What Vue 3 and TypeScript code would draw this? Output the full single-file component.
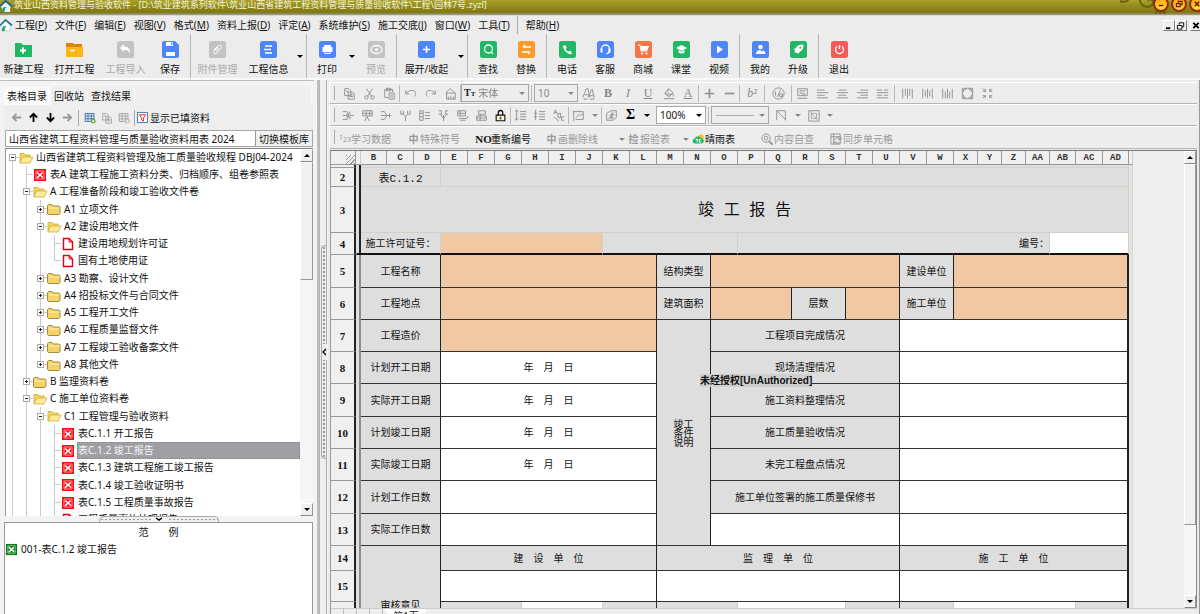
<script setup lang="ts">
import { ref } from 'vue'

interface Tool { label: string; icon: string; off?: boolean; drop?: boolean; wide?: boolean }
interface Node { level: number; kind: 'open' | 'closed' | 'doc' | 'sheet'; text: string; end?: boolean }
interface Cell { span: number; text?: string; rows?: number; kind: string }
interface Row { n: string; h: number; cells: Cell[] }

const menus: [string, string][] = [
  ['工程', 'P'], ['文件', 'F'], ['编辑', 'E'], ['视图', 'V'], ['格式', 'M'], ['资料上报', 'D'], ['评定', 'A'],
  ['系统维护', 'S'], ['施工交底', 'J'], ['窗口', 'W'], ['工具', 'T'],
]

const tile = (color: string, inner: string): string => `<rect width="17" height="17" rx="2.5" fill="${color}"/>${inner}`
const W = 'fill="none" stroke="#fff" stroke-width="1.3"'
const toolIcons: Record<string, string> = {
  create: '<path d="M0 3V2h6l2 2h9v12H0z" fill="#22b765"/><path d="M8 6.500v6M5 9.500h6" stroke="#fff" stroke-width="2"/>',
  open: '<path d="M0 2h7l1 1h8v4H0z" fill="#d9860b"/><path d="M0 6h17v10H0z" fill="#fdb813"/><path d="M4 9.500h5" stroke="#fff" stroke-width="1.500"/>',
  import: tile('#c3c3c3', '<path d="M3 7l4-4v2.500c4 0 6 2.500 6 7-1.500-3-3-3.500-6-3.500V11z" fill="#fff"/>'),
  save: '<path d="M0 2a2 2 0 0 1 2-2h11l4 4v11a2 2 0 0 1-2 2H2a2 2 0 0 1-2-2z" fill="#4f86f7"/><path d="M4 1h7v4H4zM4 11h9v4H4z" fill="#fff"/><path d="M9 1.500h1.500v2H9z" fill="#4f86f7"/>',
  attach: tile('#c3c3c3', '<path d="M5 9l4-4c2-2 4 0 3 2l-4 5c-2 2-4 0-3-2l4-4M7 10l3-3" fill="none" stroke="#fff"/>'),
  info: tile('#4f86f7', `<path d="M5 5h7M4 8.500h7M5 12h7" ${W}/>`),
  print: tile('#4f86f7', '<path d="M5 4h7v2H5zM3.500 6h10v5h-2v-1h-6v1h-2zM5.500 10h6v3h-6z" fill="#fff"/><path d="M6.500 11.500h4" stroke="#4f86f7"/>'),
  preview: tile('#c3c3c3', `<ellipse cx="8.500" cy="8.500" rx="5.500" ry="4" ${W}/><circle cx="8.500" cy="8.500" r="1.500" fill="#fff"/>`),
  expand: tile('#4f86f7', '<path d="M8.500 5v7M5 8.500h7" stroke="#fff" stroke-width="1.500"/>'),
  find: tile('#22b765', `<circle cx="8.500" cy="8" r="4" ${W}/><path d="M11 11l2 2" ${W}/>`),
  replace: tile('#fb9a2c', `<path d="M13 6H5M7 4L5 6M4 11h8M10 13l2-2" ${W}/>`),
  phone: tile('#22b765', '<path d="M5 4l2 1 .5 2-1 1.300 2.500 2.500 1.300-1 2 .7.700 2c-1 1.200-2.500.8-4.500-.5C6 10.500 4.500 8 4 6z" fill="#fff"/>'),
  service: tile('#4f86f7', `<path d="M4.500 9V8a4 4 0 0 1 8 0v1c0 2-1 3.500-3 3.500" ${W}/><path d="M3.500 7.500h2v4h-2zM11.500 7.500h2v4h-2z" fill="#fff"/>`),
  shop: tile('#f5764a', '<path d="M3 4h2l1 6h6" fill="none" stroke="#fff"/><path d="M5.500 5H14l-1.500 4.500H6z" fill="#fff"/><circle cx="7" cy="12.500" r="1.100" fill="#fff"/><circle cx="11.500" cy="12.500" r="1.100" fill="#fff"/>'),
  lesson: tile('#22b765', '<path d="M8.500 4l5.500 3-5.500 3L3 7z" fill="#fff"/><path d="M5.500 9v2.500c2 1.300 4 1.300 6 0V9l-3 1.700z" fill="#fff"/>'),
  video: tile('#4f86f7', '<path d="M6 4.500v8l6-4z" fill="#fff"/>'),
  mine: tile('#4f86f7', '<circle cx="8.500" cy="6" r="2.300" fill="#fff"/><path d="M4 13c0-3 2-4 4.500-4l1 2 1-1.500c2 .5 3 1.500 3 3.500z" fill="#fff"/>'),
  upgrade: tile('#22b765', '<path d="M13.500 3.500c-4-.3-6.500 1-8 4L3.500 8l1.500 1.300-.5 2.700 2.500-.5L8.500 13l1-2c3-1.500 4.300-4 4-7.500z" fill="#fff"/><circle cx="10.300" cy="6.700" r="1" fill="#22b765"/>'),
  exit: tile('#f65b5b', `<path d="M6 5.500a4 4 0 1 0 5 0M8.500 4v4" ${W}/>`),
}

const toolGroups: Tool[][] = [
  [{ label: '新建工程', icon: 'create' }, { label: '打开工程', icon: 'open' }, { label: '工程导入', icon: 'import', off: true }, { label: '保存', icon: 'save' }],
  [{ label: '附件管理', icon: 'attach', off: true }, { label: '工程信息', icon: 'info', drop: true }],
  [{ label: '打印', icon: 'print', drop: true }, { label: '预览', icon: 'preview', off: true }],
  [{ label: '展开/收起', icon: 'expand', drop: true, wide: true }],
  [{ label: '查找', icon: 'find' }, { label: '替换', icon: 'replace' }],
  [{ label: '电话', icon: 'phone' }, { label: '客服', icon: 'service' }, { label: '商城', icon: 'shop' }, { label: '课堂', icon: 'lesson' }, { label: '视频', icon: 'video' }],
  [{ label: '我的', icon: 'mine' }, { label: '升级', icon: 'upgrade' }],
  [{ label: '退出', icon: 'exit' }],
]

const tree: Node[] = [
  { level: 0, kind: 'open', text: '山西省建筑工程资料管理及施工质量验收规程 DBJ04-2024' },
  { level: 1, kind: 'sheet', text: '表A 建筑工程施工资料分类、归档顺序、组卷参照表' },
  { level: 1, kind: 'open', text: 'A 工程准备阶段和竣工验收文件卷' },
  { level: 2, kind: 'closed', text: 'A1 立项文件' },
  { level: 2, kind: 'open', text: 'A2 建设用地文件' },
  { level: 3, kind: 'doc', text: '建设用地规划许可证' },
  { level: 3, kind: 'doc', text: '国有土地使用证', end: true },
  { level: 2, kind: 'closed', text: 'A3 勘察、设计文件' },
  { level: 2, kind: 'closed', text: 'A4 招投标文件与合同文件' },
  { level: 2, kind: 'closed', text: 'A5 工程开工文件' },
  { level: 2, kind: 'closed', text: 'A6 工程质量监督文件' },
  { level: 2, kind: 'closed', text: 'A7 工程竣工验收备案文件' },
  { level: 2, kind: 'closed', text: 'A8 其他文件', end: true },
  { level: 1, kind: 'closed', text: 'B 监理资料卷' },
  { level: 1, kind: 'open', text: 'C 施工单位资料卷' },
  { level: 2, kind: 'open', text: 'C1 工程管理与验收资料' },
  { level: 3, kind: 'sheet', text: '表C.1.1 开工报告' },
  { level: 3, kind: 'sheet', text: '表C.1.2 竣工报告' },
  { level: 3, kind: 'sheet', text: '表C.1.3 建筑工程施工竣工报告' },
  { level: 3, kind: 'sheet', text: '表C.1.4 竣工验收证明书' },
  { level: 3, kind: 'sheet', text: '表C.1.5 工程质量事故报告' },
  { level: 3, kind: 'doc', text: '工程质量事故处理报告' },
]
const selected = ref(17)

const sheetMark = (c: string, d: string): string => `<rect x="1" y="1" width="12" height="12" fill="${c}"/><path d="M3 3h8v8H3z" fill="none" stroke="${d}" stroke-width=".8"/><path d="M4 4.500l6 5M9.500 4.500L4 10" stroke="#fff" stroke-width="1.600"/>`
const nodeIcons: Record<string, string> = {
  open: '<path d="M1 12V2.500h4l1 1.500h5v2" fill="#f6d55c" stroke="#c9a83c" stroke-width=".8"/><path d="M1 12l2.500-6H14l-3 6z" fill="#ffec94" stroke="#d2ab3c" stroke-width=".8"/>',
  closed: '<path d="M.5 11.500v-8l1-1H5l1 1.500h6l1 1v6.500l-1 1H1.500z" fill="#f3d36a" stroke="#a88a30"/><path d="M1.500 6h11" stroke="#fff3b8"/>',
  doc: '<path d="M2.500 1.500H8l3.500 3.500v7.500h-9z" fill="#fff" stroke="#e60012" stroke-width="1.400"/><path d="M8 1.500V5h3.500" fill="none" stroke="#e60012"/>',
  sheet: sheetMark('#f80c14', '#ffb0b0'),
  green: sheetMark('#0a7a1a', '#a5d8a5'),
}

const g: Record<string, string> = {
  copy: '<path d="M2 2h5l2 2v6H2zM6 6h5l2 2v6H6zM7.500 9h4M7.500 11h4M3.500 5h3"/>',
  cut: '<path d="M4 2l6 9M11 2l-6 9"/><circle cx="4" cy="12" r="2"/><circle cx="11" cy="12" r="2"/>',
  paste: '<path d="M2 3h9v3M2 3v9h4M4 1.500h5v3H4zM7 7h6v7H7zM8.500 9.500h3M8.500 11.500h3"/>',
  undo: '<path d="M2 4v4h4M2 8c3-5 9-5 11-2 1 2 0 4-1 5"/>',
  redo: '<path d="M13 4v4H9M13 8C10 3 4 3 3 6c-1 2 0 4 1 5"/>',
  brush: '<path d="M7 2l6 5H2zM3 7v7h10V7M5 14v-3M8 14v-4M11 14v-3"/>',
  effect: '<path d="M1 12L5 2h2l2 10M3 9h5M7 12l4-9h1l2 10M9 10h4M2 14h4M9 14h5"/>',
  fill: '<path d="M3 7l5-5 5 5-5 4zM7 2v4M13 8v3M2 13.500h12"/><path d="M4 8h7l-3 3z"/>',
  plus: '<path d="M7.500 2v11M2 7.500h11" stroke-width="2"/>',
  minus: '<path d="M2 7.500h11" stroke-width="2"/>',
  ratio: '<circle cx="7.500" cy="7.500" r="6.500"/><path d="M4 5v5M10 3l-4 9M9 8h3v3H9z"/>',
  wrap: '<path d="M2 2h11v8H2zM4 4.500h7M4 7h4v3M10 7v3M2 13h11"/>',
  left: '<path d="M1 3.500h9M1 6.500h13M1 9.500h9M1 12.500h13"/>',
  center: '<path d="M3 3.500h9M1 6.500h13M3 9.500h9M1 12.500h13"/>',
  right: '<path d="M5 3.500h9M1 6.500h13M5 9.500h9M1 12.500h13"/>',
  just: '<path d="M1 3.500h6M9 3.500h5M1 6.500h13M1 9.500h6M9 9.500h5M1 12.500h13"/>',
  vtop: '<path d="M2 2v11M5 2v8M7.500 2v11M10 2v8M13 2v11"/>',
  vmid: '<path d="M2 2v11M5 4v7M7.500 2v11M10 4v7M13 2v11"/>',
  vbot: '<path d="M2 2v11M5 5v8M7.500 2v11M10 5v8M13 2v11"/>',
  full: '<path d="M1.500 1.500h12v12h-12z"/><path d="M3 6V3h3M9 3h3v3M12 9v3H9M6 12H3V9"/>',
  shrink: '<path d="M2 2l3 3M5 2v3H2M13 2l-3 3M10 2v3h3M2 13l3-3M2 10h3v3M13 13l-3-3M13 10h-3v3"/>',
  mergeA: '<path d="M1 3h5v9H1M6 7.500H1M9 3l-2 4.500L9 12M9 7.500h5M10 5l-3 2.500L10 10"/>',
  mergeB: '<path d="M2 2h11v6H2zM2 5h11M6 2v6M10 2v6M4 14l3-5 3 5"/>',
  mergeC: '<path d="M1 3h4l3 4.500L5 12H1M1 7.500h12M11 5v5"/>',
  insA: '<path d="M2 2v4h3V2M10 2v4h3V2M5 6l2.500 3L10 6M7.500 9v5"/>',
  insB: '<path d="M2 2h4v11H2zM6 5H2M6 9H2M8 4h6M8 7.500h6M8 11h6"/>',
  insC: '<path d="M2 2h3v4H2M13 2h-3v4h3M4 6l3.500 5L11 6M7.500 7v7"/>',
  rowA: '<path d="M2 2h9v6H2zM2 5h9M5 2v6M3 11h9l2-3M5 13h6"/>',
  rowB: '<path d="M4 2h8v4H4zM2 8h11v5H2zM2 10.500h11M6 6v7"/>',
  spaceA: '<path d="M3 1v12M1 3l2-2 2 2M1 11l2 2 2-2M7 3h7M7 6h7M7 9h7M7 12h7"/>',
  spaceB: '<path d="M3 1v12M1 5h4M1 9h4M7 3h7M7 6h7M7 9h7M7 12h7"/>',
  abc: '<path d="M2 6l2-5 2 5M3 4h2M7 5v5h3V5H7M14 9h-3v4h3M2 9l6 5"/>',
  picture: '<path d="M2 2v12M1 3h12v9H4M5 10l3-4 2 2 2-2M11 5h1"/>',
  inspect: '<path d="M2 5l5-3h6v8l-4 3H2zM5 7h6M5 10h5M8 4v8M4 12l6-8"/>',
  diag: '<path d="M2 2h10v11M2 2l11 11M2 2v11"/>',
  boxed: '<path d="M2 2h12v12H2z"/><path d="M5 2v3l8 8M5 5h6v6H5z" stroke-width=".8"/>',
  gridadd: '<path d="M1.500 2h11v10h-11zM1.500 5h11M1.500 8.500h11M5 2v10M9 2v10" /><circle cx="11.500" cy="11.500" r="3" class="dot"/><path class="cross" d="M11.500 10v3M10 11.500h3"/>',
}
type Mini = string
const row1a: Mini[] = ['copy', 'cut', 'paste', '|', 'undo', 'redo', 'brush', '|']
const row1b: Mini[] = ['effect', 'tB', 'tI', 'tU', 'fill', 'tA', '|', 'plus', 'minus', '|', 't²', '|', 'ratio', '|', 'wrap', 'left', 'center', 'right', 'just', '||', 'vtop', 'vmid', 'vbot', 'full', 'shrink']
const row2a: Mini[] = ['mergeA', 'mergeB', 'mergeC', 'insA', 'insB', 'insC', 'rowA', 'rowB']

const letters: string[] = 'BCDEFGHIJKLMNOPQRSTUVWXYZ'.split('').concat(['AA', 'AB', 'AC', 'AD'])
const colWidth = (c: string): number => (['X', 'Y', 'Z', 'AA'].includes(c) ? 24 : ['B', 'AB', 'AD'].includes(c) ? 26 : 27)

const o = (span: number): Cell => ({ span, kind: 'fill' })
const w = (span: number, text = ''): Cell => ({ span, text, kind: 'blank' })
const l = (span: number, text = '', rows = 1): Cell => ({ span, text, rows, kind: 'label' })
const soft = (span: number, text = '', kind = 'soft'): Cell => ({ span, text, kind })
const date = '年　月　日'
const rows: Row[] = [
  { n: '·', h: 3, cells: [soft(29)] },
  { n: '2', h: 19, cells: [soft(3, '表C.1.2', 'soft code'), soft(26)] },
  { n: '3', h: 46, cells: [soft(29, '竣 工 报 告', 'soft title')] },
  { n: '4', h: 22, cells: [soft(3, '施工许可证号：'), soft(6, '', 'soft peach'), soft(5), soft(12, '编号：', 'soft end'), soft(3, '', 'soft paper')] },
  { n: '5', h: 33, cells: [l(3, '工程名称'), o(8), l(2, '结构类型'), o(7), l(2, '建设单位'), o(7)] },
  { n: '6', h: 32, cells: [l(3, '工程地点'), o(8), l(2, '建筑面积'), o(3), l(2, '层数'), o(2), l(2, '施工单位'), o(7)] },
  { n: '7', h: 32, cells: [l(3, '工程造价'), o(8), { span: 2, rows: 7, text: '竣工条件说明', kind: 'label narrow' }, l(7, '工程项目完成情况'), w(9)] },
  { n: '8', h: 32, cells: [l(3, '计划开工日期'), w(8, date), l(7, '现场清理情况'), w(9)] },
  { n: '9', h: 33, cells: [l(3, '实际开工日期'), w(8, date), l(7, '施工资料整理情况'), w(9)] },
  { n: '10', h: 32, cells: [l(3, '计划竣工日期'), w(8, date), l(7, '施工质量验收情况'), w(9)] },
  { n: '11', h: 32, cells: [l(3, '实际竣工日期'), w(8, date), l(7, '未完工程盘点情况'), w(9)] },
  { n: '12', h: 33, cells: [l(3, '计划工作日数'), w(8), l(7, '施工单位签署的施工质量保修书'), w(9)] },
  { n: '13', h: 32, cells: [l(3, '实际工作日数'), w(8), w(7), w(9)] },
  { n: '14', h: 25, cells: [l(3, '审核意见', 3), l(8, '建　设　单　位'), l(9, '监　理　单　位'), l(9, '施　工　单　位')] },
  { n: '15', h: 31, cells: [w(8), w(9), w(9)] },
  { n: '', h: 64, cells: [soft(3), soft(3, '', 'soft paper'), soft(2, '', 'soft edge'), soft(3), soft(4, '', 'soft paper'), soft(2, '', 'soft edge'), soft(2), soft(5, '', 'soft paper'), soft(2, '', 'soft last')] },
]
</script>

<template>
  <div class="app">
    <header class="titlebar">
      <svg class="logo" viewBox="0 0 13 13"><path d="M0 7L6 1l7 6-2 1v5H2V8z" fill="#e8f4fa" /><path d="M0 7L6 1l7 6" fill="none" stroke="#1c5f96" stroke-width="2" /><path d="M2 13c0-5 3-6 5-5-2 1-2 3-2 5z" fill="#22a06a" /></svg>
      <span class="caption">筑业山西资料管理与验收软件 - [D:\筑业建筑系列软件\筑业山西省建筑工程资料管理与质量验收软件\工程\园林7号.zyzl]</span>
      <svg class="swirl" viewBox="0 0 48 15"><path d="M0 1c4 2 8 0 8-1M20 0c0 6 8 9 12 5 3-4-2-8-4-4M34 0c-1 5 2 7 4 6M36 14c0-5 8-5 10-1M40 14c0-3 4-3 5 0" fill="none" stroke="#6a6214" stroke-width="2" /></svg>
      <button class="round" aria-label="最小化"><svg viewBox="0 0 16 16"><path d="M5 10h6" stroke-width="2" /></svg></button>
      <button class="round" aria-label="还原"><svg viewBox="0 0 16 16"><path d="M4.500 7.500h5v4h-5zM7 7V4.500h5v4.500h-2" /></svg></button>
      <button class="round" aria-label="关闭"><svg viewBox="0 0 16 16"><path d="M5 5l6 6M11 5l-6 6" stroke-width="2" /></svg></button>
    </header>

    <nav class="menubar">
      <svg class="logo" viewBox="0 0 13 13"><path d="M0 7L6 1l7 6-2 1v5H2V8z" fill="#fff" stroke="#8bb" stroke-width=".5" /><path d="M0 7L6 1l7 6" fill="none" stroke="#1c7a96" stroke-width="2" /><path d="M2 13c0-5 3-6 5-5-2 1-2 3-2 5z" fill="#22a06a" /></svg>
      <button v-for="m in menus" :key="m[0]">{{ m[0] }}(<u>{{ m[1] }}</u>)</button>
      <i class="menuline"></i>
      <button>帮助(<u>H</u>)</button>
      <span class="mdi">
        <button aria-label="最小化窗口"><svg viewBox="0 0 11 10"><path d="M2 8h5" stroke-width="2" /></svg></button>
        <button aria-label="还原窗口"><svg viewBox="0 0 11 10"><path d="M1.500 5h5v4h-5zM3.500 4V2h5v4.500h-2" /></svg></button>
        <button aria-label="关闭窗口" class="far"><svg viewBox="0 0 11 10"><path d="M2.500 2l6 6M8.500 2l-6 6" stroke-width="2" /></svg></button>
      </span>
    </nav>

    <div class="toolbar">
      <div v-for="(grp, gi) in toolGroups" :key="gi" class="group">
        <template v-for="t in grp" :key="t.label">
          <button class="tool" :class="{ off: t.off, long: t.label.length === 4, wide: t.wide }" :disabled="t.off">
            <svg viewBox="0 0 17 17" v-html="toolIcons[t.icon]"></svg><span>{{ t.label }}</span>
          </button>
          <button v-if="t.drop" class="drop" :aria-label="t.label + '选项'"><i class="tri"></i></button>
        </template>
      </div>
    </div>

    <main class="body">
      <aside class="side">
        <div class="tabs">
          <button class="active">表格目录</button><button>回收站</button><button>查找结果</button>
        </div>
        <div class="sidetools">
          <button aria-label="左移" class="dim"><svg viewBox="0 0 12 12"><path d="M11 6H2M6 2L2 6l4 4" /></svg></button>
          <button aria-label="上移"><svg viewBox="0 0 12 12"><path d="M6 11V2M2 6l4-4 4 4" /></svg></button>
          <button aria-label="下移"><svg viewBox="0 0 12 12"><path d="M6 1v9M2 6l4 4 4-4" /></svg></button>
          <button aria-label="右移" class="dim"><svg viewBox="0 0 12 12"><path d="M1 6h9M6 2l4 4-4 4" /></svg></button>
          <i class="bar"></i>
          <button aria-label="添加表格" class="mini blue"><svg viewBox="0 0 15 15" v-html="g.gridadd"></svg></button>
          <button aria-label="复制表格" class="mini"><svg viewBox="0 0 15 15" v-html="g.copy"></svg></button>
          <button aria-label="删除表格" class="mini"><svg viewBox="0 0 15 15" v-html="g.gridadd"></svg></button>
          <i class="bar"></i>
          <button class="filter"><svg viewBox="0 0 12 12"><path d="M.5.5h11v11H.5z" fill="#fff" stroke="#3f6fae" /><path d="M2.500 3h7L7 6.500V10L5 8.500v-2z" fill="#fff" stroke="#e02020" /></svg>显示已填资料</button>
        </div>
        <div class="template">
          <input type="text" aria-label="模板库" value="山西省建筑工程资料管理与质量验收资料用表 2024" />
          <button>切换模板库</button>
        </div>
        <div class="treebox">
          <ul class="tree">
            <li v-for="(n, i) in tree" :key="n.text" :class="{ sel: selected === i }" @click="selected = i">
              <i v-for="k in n.level" :key="k" class="guide"></i>
              <i class="guide own" :class="{ end: n.end, start: i === 0 }"><button v-if="n.kind === 'open' || n.kind === 'closed'" class="toggle" :class="n.kind" :aria-label="n.text"></button></i>
              <svg viewBox="0 0 14 14" v-html="nodeIcons[n.kind]"></svg>
              <span>{{ n.text }}</span>
            </li>
          </ul>
          <div class="scroll"><button aria-label="向上滚动"><i class="tri up"></i></button><i class="thumb short"></i><i class="track"></i><button aria-label="向下滚动"><i class="tri"></i></button></div>
        </div>
        <div class="hsplit"><button aria-label="折叠范例"><svg viewBox="0 0 8 5"><path d="M1 1l3 2 3-2" /></svg></button></div>
        <section class="samples">
          <h2>范　　例</h2>
          <p><svg viewBox="0 0 14 14" v-html="nodeIcons.green"></svg>001-表C.1.2 竣工报告</p>
        </section>
      </aside>

      <div class="vsplit"><div class="grip"><button aria-label="折叠目录"><svg viewBox="0 0 5 8"><path d="M4 1L1 4l3 3" /></svg></button></div></div>

      <section class="editor">
        <div class="strip">
          <template v-for="(m, i) in row1a" :key="i"><i v-if="m === '|'" class="sep"></i><button v-else class="mini" :aria-label="m"><svg viewBox="0 0 15 15" v-html="g[m]"></svg></button></template>
          <label class="combo font"><b>T<small>T</small></b><select aria-label="字体" disabled><option>宋体</option></select><i class="tri"></i></label>
          <i class="sep four"></i>
          <label class="combo size"><select aria-label="字号" disabled><option>10</option></select><i class="tri"></i></label>
          <template v-for="(m, i) in row1b" :key="i">
            <i v-if="m === '|'" class="sep"></i><i v-else-if="m === '||'" class="sep four"></i>
            <button v-else-if="m[0] === 't'" class="mini letter" :class="'k' + m[1]"><template v-if="m[1] === '²'">b²</template><template v-else>{{ m[1] }}</template></button>
            <button v-else class="mini" :class="{ roomy: m === 'ratio' }" :aria-label="m"><svg viewBox="0 0 15 15" v-html="g[m]"></svg></button>
          </template>
        </div>
        <div class="strip second">
          <button v-for="m in row2a" :key="m" class="mini" :aria-label="m"><svg viewBox="0 0 15 15" v-html="g[m]"></svg></button>
          <button class="mini" aria-label="锁定"><svg viewBox="0 0 15 15"><path d="M5 7V4c0-3 5-3 5 0v3" stroke="#111" stroke-width="1.500" /><path d="M2.500 7h10v6.500h-10z" fill="#fff6a8" stroke="#111" stroke-width="1.300" /><path d="M7.500 9v3" stroke="#2a52b8" stroke-width="2" /></svg></button>
          <i class="sep"></i>
          <button v-for="m in ['spaceA', 'spaceB', 'abc']" :key="m" class="mini" :aria-label="m"><svg viewBox="0 0 15 15" v-html="g[m]"></svg></button>
          <i class="sep"></i>
          <button class="mini" aria-label="图片"><svg viewBox="0 0 15 15" v-html="g.picture"></svg></button>
          <button class="pick" aria-label="图片选项"><i class="tri pale"></i></button>
          <i class="sep"></i>
          <button class="mini" aria-label="检查"><svg viewBox="0 0 15 15" v-html="g.inspect"></svg></button>
          <button class="mini letter sum">Σ</button>
          <button class="pick" aria-label="求和选项"><i class="tri"></i></button>
          <label class="combo zoom"><select aria-label="缩放"><option>100%</option></select><i class="tri"></i></label>
          <i class="sep four"></i>
          <label class="combo line"><select aria-label="线型" disabled><option></option></select><i class="tri"></i></label>
          <button class="mini" aria-label="斜线"><svg viewBox="0 0 15 15" v-html="g.diag"></svg></button>
          <button class="pick" aria-label="斜线选项"><i class="tri pale"></i></button>
          <button class="mini" aria-label="边框"><svg viewBox="0 0 15 15" v-html="g.boxed"></svg></button>
          <button class="pick" aria-label="边框选项"><i class="tri pale"></i></button>
        </div>
        <div class="strip third">
          <button class="word"><small>1<sub>2</sub><sub>3</sub></small>学习数据</button>
          <button class="word"><span class="mark">中</span>特殊符号</button>
          <button class="word on"><em>NO</em>重新编号</button>
          <button class="word"><span class="mark">中</span>画删除线</button>
          <button class="pick" aria-label="删除线选项"><i class="tri pale"></i></button>
          <button class="word tight"><span class="mark">捡</span>报验表</button>
          <button class="pick" aria-label="报验表选项"><i class="tri pale"></i></button>
          <button class="word on"><svg viewBox="0 0 13 11"><circle cx="9.500" cy="3.500" r="3" fill="#fbb81b" /><path d="M3 10.500a2.800 2.800 0 0 1 0-5.500 3.500 3.500 0 0 1 6.500-.5 3 3 0 0 1 .5 6z" fill="#22b765" /><path d="M4 6h3M5.500 6v3M10 6H8v3h2" stroke="#fff" fill="none" /></svg>晴雨表</button>
          <button class="word"><svg viewBox="0 0 13 13" class="grey"><circle cx="5.500" cy="5.500" r="4.500" /><circle cx="5.500" cy="5.500" r="2" /><path d="M9 9l3.500 3.500" stroke-width="2" /></svg>内容自查</button>
          <button class="word"><svg viewBox="0 0 13 13" class="grey"><path d="M1 1h10v11H1zM1 4h10M4 1v11" /><path d="M5 8c1-4 6-3 7-1M12 4v3H9M12 9c-1 3-5 3-6 1M5 12v-2h3" /></svg>同步单元格</button>
        </div>

        <div class="work">
          <div class="canvas">
            <div class="sheet">
              <table>
                <colgroup>
                  <col class="c-head" /><col class="c-a" />
                  <col v-for="c in letters" :key="c" :style="{ width: colWidth(c) + 'px' }" />
                  <col class="c-tail" />
                </colgroup>
                <thead>
                  <tr><th class="corner"></th><th class="a"></th><th v-for="c in letters" :key="c" scope="col">{{ c }}</th><th class="a"></th></tr>
                </thead>
                <tbody>
                  <tr v-for="(r, i) in rows" :key="i" :class="{ ruled: i > 3, prerule: i === 3 }" :style="{ height: r.h + 'px' }">
                    <th scope="row"><span v-if="i">{{ r.n }}</span></th>
                    <td class="a"></td>
                    <td v-for="(c, j) in r.cells" :key="j" :colspan="c.span" :rowspan="c.rows || 1" :class="c.kind"><div v-if="c.text">{{ c.text }}</div></td>
                    <td class="tail"></td>
                  </tr>
                </tbody>
              </table>
              <span class="watermark">未经授权[UnAuthorized]</span>
            </div>
            <div class="scroll big"><button aria-label="向上滚动表格"><i class="tri up"></i></button><i class="thumb"></i><i class="track"></i><button aria-label="向下滚动表格"><i class="tri"></i></button></div>
          </div>
          <footer class="sheets">
            <button aria-label="首页"><svg viewBox="0 0 6 4"><path d="M1 0v4M5 0L3 2l2 2" /></svg></button>
            <button aria-label="上一页"><svg viewBox="0 0 6 4"><path d="M4 0L2 2l2 2" /></svg></button>
            <button aria-label="下一页"><svg viewBox="0 0 6 4"><path d="M2 0l2 2-2 2" /></svg></button>
            <button aria-label="末页"><svg viewBox="0 0 6 4"><path d="M1 0l2 2-2 2M5 0v4" /></svg></button>
            <button class="page">第1页</button>
          </footer>
        </div>
      </section>
    </main>
  </div>
</template>

<style>
body { margin: 0; overflow: hidden; }
</style>

<style scoped>
.app { height: 100vh; display: flex; flex-direction: column; overflow: hidden; background: #ececec; color: #111; font: 10px/14px "Noto Sans", "Noto Sans CJK SC", sans-serif; }
* { box-sizing: border-box; }
button, input, select { font: inherit; color: inherit; margin: 0; padding: 0; border: 0; background: none; white-space: nowrap; }
i { font-style: normal; display: block; flex: none; }
svg { display: block; flex: none; overflow: visible; }
.logo { width: 12px; height: 12px; }
.tri { width: 0; height: 0; border: 3px solid transparent; border-top-color: #000; border-bottom: 0; }
.tri.up { border-top: 0; border-bottom: 3px solid #000; }
.tri.pale { border-top-color: #888; }

.titlebar { flex: none; height: 16px; display: flex; background: linear-gradient(#aaa02b, #81780f 12px, #8f8b66 14px, #a9a89b); border-bottom: 1px solid #d8d8d8; color: #f6f4de; overflow: hidden; }
.caption { flex: 1; font-size: 9px; line-height: 10px; margin-left: 2px; white-space: nowrap; }
.swirl { width: 48px; height: 15px; margin-right: -16px; }
.round { flex: none; width: 16px; height: 16px; margin: -4px 1px 0; border-radius: 50%; border: 2px solid #9a2a08; background: radial-gradient(circle at 50% 80%, #ffe23e, #f79a10); }
.round svg { width: 12px; height: 12px; fill: none; stroke: #6b1200; stroke-width: 1.5; }
.round:last-child { margin-right: -5px; }

.menubar { flex: none; height: 18px; display: flex; align-items: center; gap: 8px; }
.menubar .logo { margin-right: -5px; }
.menubar > button { line-height: 16px; }
.menuline { width: 1px; height: 18px; background: #aaa; margin: 0 0 0 -1px; }
.mdi { margin-left: auto; display: flex; margin-right: -2px; }
.mdi button { width: 12px; height: 11px; background: #eee; border: 1px solid #fff; border-right-color: #777; border-bottom-color: #777; }
.mdi .far { margin-left: 3px; }
.mdi svg { width: 10px; height: 9px; fill: none; stroke: #000; }

.toolbar { flex: none; height: 44px; display: flex; margin-left: -3px; }
.group { display: flex; border-right: 1px solid #b5b5b5; padding: 0 1px; }
.group:last-child { border: 0; }
.tool { width: 38px; display: flex; flex-direction: column; align-items: center; padding-top: 7px; }
.tool.long { width: 51px; }
.tool.wide { width: 57px; }
.tool svg { width: 17px; height: 17px; }
.tool span { margin-top: 4px; }
.off { color: #aaa; }
.drop { width: 11px; display: flex; align-items: center; justify-content: center; }

.body { flex: 1; min-height: 0; display: flex; border-top: 2px solid #fafafa; }
.side { flex: none; width: 314px; padding: 6px 1px 0 4px; display: flex; flex-direction: column; background: #f3f3f3; border-top: 1px solid #bdbdbd; }
.tabs { flex: none; height: 18px; display: flex; background: #f6f6f6; gap: 1px; padding-right: 2px; }
.tabs button { padding: 0 3px; background: #eee; }
.tabs .active { background: #fafafa; }
.tabs::after { content: ""; flex: 1; background: #efefef; }
.sidetools { flex: none; height: 25px; display: flex; align-items: center; padding-left: 4px; background: #eee; }
.sidetools button { width: 17px; display: flex; justify-content: center; align-items: center; }
.sidetools svg { width: 11px; height: 11px; fill: none; stroke: #000; stroke-width: 2; }
.sidetools .dim svg { stroke: #999; }
.sidetools .mini svg { width: 12px; height: 12px; stroke: #999; stroke-width: 1; }
.sidetools .mini.blue svg { stroke: #4d7fb5; stroke-width: 1.3; }
.mini :deep(.dot) { fill: #bbb; stroke: none; }
.mini.blue :deep(.dot) { fill: #6aa422; }
.mini :deep(.cross) { stroke: #fff; }
.sidetools .filter { width: auto; gap: 2px; }
.filter svg { stroke-width: 1; }
.bar { width: 1px; height: 16px; background: #aaa; margin: 0 2px; }
.template { flex: none; height: 17px; display: flex; margin: 0 0 1px 1px; border: 1px solid #a8a8a8; }
.template input { flex: 1; min-width: 0; background: #fff; padding: 0 3px; }
.template button { border-left: 1px solid #999; padding: 0 3px; background: #f0f0f0; }
.treebox { flex: 1; min-height: 0; display: flex; margin-left: 1px; background: #fff; border-left: 1px solid #999; border-top: 1px solid #888; }
.tree { flex: 1; min-width: 0; margin: 0; padding: 0 0 0 2px; list-style: none; overflow: hidden; }
.tree li { height: 17px; display: flex; align-items: center; white-space: nowrap; cursor: default; }
.tree li:nth-child(4n) { height: 18px; }
.tree svg { width: 14px; height: 14px; }
.tree span { flex: 1; margin-left: 2px; padding-left: 1px; line-height: 17px; }
.tree .sel span { background: #a09fa4; color: #f4f4f4; outline: 1px dotted #888; outline-offset: -1px; }
.guide { width: 14px; height: 100%; display: flex; align-items: center; background: linear-gradient(#ccc, #ccc) 4px 0 / 1px 100% no-repeat; }
.guide.own { width: 11px; background: linear-gradient(#ccc, #ccc) 4px 0 / 1px 100% no-repeat, linear-gradient(#ccc, #ccc) 4px 8px / 8px 1px no-repeat; }
.guide.own.end { background-size: 1px 50%, 8px 1px; }
.guide.own.start { background-position: 4px 100%, 4px 8px; background-size: 1px 50%, 8px 1px; }
.toggle { width: 7px; height: 7px; margin-left: 1px; border: 1px solid #aaa; background: linear-gradient(#222, #222) center / 3px 1px no-repeat, #fff; }
.toggle.closed { background: linear-gradient(#222, #222) center / 3px 1px no-repeat, linear-gradient(#222, #222) center / 1px 3px no-repeat, #fff; }
.scroll { flex: none; width: 13px; display: flex; flex-direction: column; background: #f6f6f6; }
.scroll button { flex: none; height: 13px; display: flex; align-items: center; justify-content: center; background: #f0f0f0; border: 1px solid #fff; border-right-color: #999; border-bottom-color: #888; }
.thumb { background: #f1f1f1; border: 1px solid #fff; border-right-color: #999; border-bottom-color: #999; flex: 350; }
.track { flex: 68; }
.thumb.short { flex: 117; }
.thumb.short + .track { flex: 226; }
.hsplit { flex: none; height: 6px; width: 120px; margin: 0 auto; border: 1px solid #aaa; border-bottom: 0; border-radius: 5px 5px 0 0; display: flex; justify-content: center; background: radial-gradient(circle, #999 1px, transparent 1px) 0 0 / 4px 5px, #eee; }
.hsplit button { width: 16px; background: #f3f3f3; display: flex; justify-content: center; }
.hsplit svg { width: 8px; height: 5px; fill: none; stroke: #000; stroke-width: 1.5; }
.samples { flex: none; height: 92px; background: #fff; border: 1px solid #999; border-bottom: 0; }
.samples h2 { margin: 2px 0 3px; font-size: 10px; line-height: 14px; font-weight: 400; text-align: center; }
.samples p { margin: 0; display: flex; align-items: center; gap: 3px; }
.samples svg { width: 13px; height: 13px; }

.vsplit { flex: none; width: 14px; background: linear-gradient(90deg, #f3f3f3 3px, #c2c2c2 3px, #b5b5b5 6px, #eee 6px, #eee 12px, #aaa 12px, #aaa 13px, #f4f4f4 13px); display: flex; align-items: center; padding-left: 7px; }
.grip { width: 5px; height: 214px; margin-top: 10px; border: 1px solid #aaa; border-right: 0; border-radius: 4px 0 0 4px; background: radial-gradient(circle, #999 1px, transparent 1px) 0 0 / 4px 4px, #eee; display: flex; align-items: center; }
.grip button { width: 5px; height: 16px; background: #eee; display: flex; align-items: center; }
.grip svg { width: 5px; height: 8px; fill: none; stroke: #000; stroke-width: 1.3; }

.editor { flex: 1; min-width: 0; display: flex; flex-direction: column; padding: 2px 2px 0 1px; border-right: 1px solid #999; }
.strip { flex: none; height: 22px; display: flex; align-items: center; padding-left: 9px; border-top: 1px solid #fff; border-bottom: 1px solid #b5b5b5; border-left: 1px solid #fff; background: linear-gradient(#aaa, #aaa) 4px 3px / 1px 14px no-repeat, #ededed; color: #888; }
.strip.third { height: 23px; padding-top: 3px; color: #999; }
.mini { flex: none; width: 20px; height: 18px; display: flex; align-items: center; justify-content: center; }
.second .mini { width: 19px; }
.mini.roomy { width: 26px; }
.strip .mini svg { width: 13px; height: 13px; fill: none; stroke: #929292; stroke-width: 1.1; }
.letter { font-family: "Liberation Serif", serif; font-size: 12px; font-weight: 700; }
.kI { font-style: italic; font-weight: 400; }
.kU { text-decoration: underline; font-weight: 400; }
.kA { text-decoration: underline; font-weight: 400; }
.k² { width: 24px; font-style: italic; font-weight: 400; }
.sum { color: #000; font-size: 14px; }
.sep { width: 1px; height: 17px; background: #b8b8b8; }
.sep.four { width: 3px; margin: 0 1px; background: linear-gradient(90deg, #eee 1px, #b8b8b8 1px, #b8b8b8 2px, #eee 2px); }
.combo { position: relative; flex: none; height: 18px; display: flex; align-items: center; border: 1px solid #a8a8a8; }
.combo select { appearance: none; flex: 1; min-width: 0; height: 16px; padding-left: 3px; opacity: 1; }
.combo .tri { position: absolute; right: 3px; top: 7px; border-top-color: #888; pointer-events: none; }
.combo.font { width: 68px; padding-left: 2px; }
.combo b { color: #222; font: bold 10px/14px "Liberation Serif", serif; }
.combo small { font-size: 7px; }
.combo.size { width: 44px; }
.combo.zoom { width: 50px; background: #fff; color: #111; margin-left: 3px; }
.combo.zoom .tri { border-top-color: #000; }
.combo.line { width: 58px; margin-right: 3px; background: linear-gradient(#aaa, #aaa) 4px 50% / 38px 1px no-repeat; }
.pick { flex: none; width: 13px; display: flex; justify-content: center; }
.word { flex: none; width: 69px; display: flex; align-items: center; gap: 1px; }
.word.tight { width: 51px; }
.word.on { color: #111; }
.word:last-child { width: auto; }
.word svg { width: 12px; height: 12px; }
.grey { fill: none; stroke: #929292; }
.word small { width: 11px; font-size: 7px; line-height: 8px; display: flex; }
.word sub { font-size: 7px; line-height: 10px; vertical-align: baseline; padding-top: 1px; }
.word em { font: 700 11px/12px "Liberation Serif", serif; width: 13px; display: flex; justify-content: center; }
.mark { width: 11px; font-size: 10px; font-weight: 700; }

.work { flex: 1; min-height: 0; display: flex; flex-direction: column; margin-top: 1px; border-top: 1px solid #777; border-left: 1px solid #999; margin-left: 1px; }
.canvas { flex: 1; min-height: 0; display: flex; background: #efefef; }
.sheet { position: relative; flex: 1; min-width: 0; overflow: hidden; }
.scroll.big { width: 13px; border-right: 1px solid #888; }
table { table-layout: fixed; width: 802px; border-collapse: separate; border-spacing: 0; font: 10px/12px "Liberation Mono", "Noto Sans CJK SC", monospace; }
.c-head { width: 25px; }
.c-a { width: 5px; }
.c-tail { width: 4px; }
th, td { padding: 0; height: inherit; overflow: hidden; }
thead tr { height: 14px; }
thead th { font: 700 9px/12px "Liberation Mono", "Noto Sans CJK SC", monospace; color: #333; background: #f0f0f0; border-right: 1px solid #999; border-bottom: 1px solid #999; }
thead .a { border-right-color: #ccc; }
thead .corner { background: repeating-linear-gradient(135deg, #999 0 1px, #eee 1px 3px) right bottom / 9px 9px no-repeat, #efefef; clip-path: none; }
tbody th { background: #f0f0f0; border-bottom: 1px solid #999; border-right: 2px solid #222; font: 700 11px/12px "Liberation Serif", serif; }
td.a { background: #dedede; border-right: 2px solid #20242c; border-left: 1px solid #ddd; }
.ruled td.a { border-right-color: #8e8e8e; }
td { text-align: center; background: #dedede; }
td div { padding-top: 3px; }
.soft { border-right: 1px solid #d2d0ca; border-bottom: 1px solid #d2d0ca; }
.code { font-size: 11px; }
.title { font-size: 16px; line-height: 20px; }
.end div { text-align: right; }
.soft.peach { background: #f0c8a4; }
.soft.paper { background: #fff; }
.soft.edge { border-right-color: #333; }
.soft.last { border-right: 2px solid #222; }
.prerule td:not(.tail) { border-bottom: 2px solid #111; }
.label, .fill, .blank { border-right: 1px solid #222; border-bottom: 1px solid #333; }
.ruled td:nth-last-child(2) { border-right: 2px solid #222; }
.fill { background: #f0c8a4; }
.blank { background: #fff; }
.narrow div { width: 20px; margin: 0 auto; line-height: 9px; }
.label div, .blank div { white-space: nowrap; }
.narrow div { white-space: normal; }
td.tail { background: #e4e4e0; border: 0; border-right: 1px solid #d8d8d0; }
.watermark { position: absolute; left: 369px; top: 223px; background: #cfcfcf; font: 700 10px/13px "Liberation Sans", "Noto Sans CJK SC", sans-serif; white-space: nowrap; }
.sheets { flex: none; height: 6px; display: flex; background: #eee; border-top: 1px solid #ccc; overflow: hidden; }
.sheets button { flex: none; width: 13px; height: 14px; padding: 1px 3px; border-right: 1px solid #bbb; color: #777; }
.sheets svg { width: 6px; height: 4px; fill: none; stroke: #888; }
.sheets .page { width: 42px; margin-left: 2px; padding: 0; border: 0; color: #111; line-height: 10px; background: #fff; clip-path: polygon(0 0, 100% 0, 80% 100%, 20% 100%); }
</style>
